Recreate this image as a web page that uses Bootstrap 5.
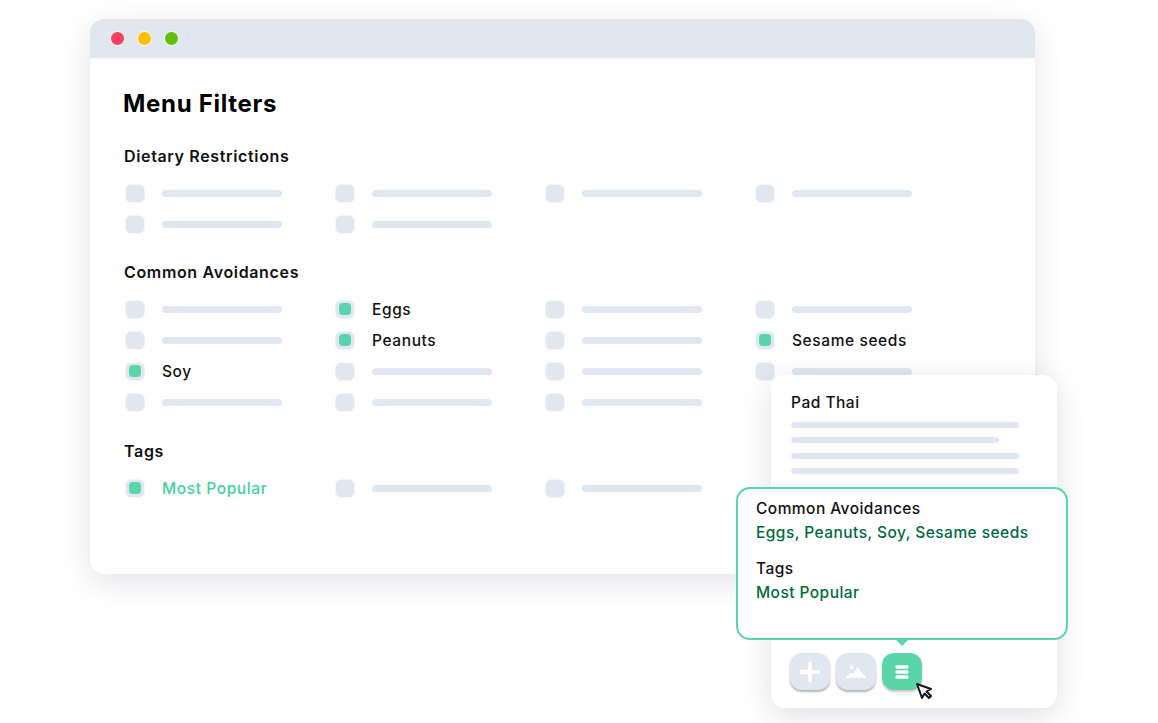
<!DOCTYPE html>
<html lang="en">
<head>
  <meta charset="UTF-8" />
  <meta name="viewport" content="width=device-width, initial-scale=1.0"/>
  <title>Menu Filters</title>
  <link href="https://cdn.jsdelivr.net/npm/bootstrap@5.3.3/dist/css/bootstrap.min.css" rel="stylesheet"/>
  <style>
    body {
      background-color: #ffffff;
      font-family: Inter, "Liberation Sans", sans-serif;
      color: #111111;
      overflow: hidden;
    }
    .stage {
      position: relative;
      width: 1158px;
      height: 723px;
      padding: 19px 0 0 90px;
    }
    .app-window {
      width: 945px;
      height: 555px;
      border-radius: 14px;
      overflow: hidden;
      background-color: #fff;
      box-shadow: 0 8px 30px rgba(40, 50, 70, .13);
    }
    .title-bar {
      height: 39px;
      padding-left: 20px;
      gap: 12px;
      background-color: #e0e7f1;
    }
    .dot {
      width: 15px;
      height: 15px;
      border-radius: 50%;
      border: 1px solid #fff;
    }
    .dot-red { background-color: #f5405f; }
    .dot-yellow { background-color: #ffc000; }
    .dot-green { background-color: #62bf0c; }
    .window-body {
      padding: 31px 0 0 33px;
    }
    .page-title {
      font-size: 24px;
      line-height: 30px;
      font-weight: 700;
      letter-spacing: .7px;
      color: #000;
      margin: 0;
    }
    .group-title {
      font-size: 16px;
      line-height: 20px;
      font-weight: 600;
      letter-spacing: .65px;
      margin: 27px 0 17px 1px;
    }
    .filter-grid + .group-title {
      margin-top: 28px;
    }
    .group-title.tags-title {
      margin-top: 29px;
    }
    .filter-grid {
      display: grid;
      grid-template-columns: repeat(4, 210px);
      row-gap: 11px;
      margin-left: 2px;
    }
    .filter-item {
      height: 20px;
      gap: 17px;
      font-size: 15.5px;
      letter-spacing: .6px;
      font-weight: 500;
    }
    .check-box {
      width: 20px;
      height: 19px;
      flex: none;
      border-radius: 6px;
      background-color: #e0e7f1;
      border: 1px solid #f1f4f9;
    }
    .check-box.on::after {
      content: "";
      width: 12px;
      height: 12px;
      border-radius: 4px;
      background-color: #5ad5a9;
    }
    .skeleton {
      display: block;
      height: 7px;
      border-radius: 4px;
      background-color: #e0e7f1;
    }
    .filter-item .skeleton {
      width: 120px;
    }
    .filter-label {
      padding-top: 1px;
    }
    .green-text {
      color: #3fd09c;
    }
    .menu-card {
      position: absolute;
      left: 771px;
      top: 375px;
      width: 286px;
      height: 333px;
      padding: 18px 20px 18px 20px;
      border-radius: 14px;
      background-color: #fff;
      box-shadow: 0 8px 30px rgba(40, 50, 70, .15);
    }
    .card-name {
      font-size: 15.5px;
      line-height: 20px;
      font-weight: 500;
      letter-spacing: .5px;
      margin-bottom: 9px;
    }
    .desc-lines {
      gap: 9.3px;
    }
    .desc-lines .skeleton {
      height: 6px;
      width: 228px;
    }
    .desc-lines .skeleton.short {
      width: 208px;
    }
    .info-box {
      position: absolute;
      left: -35px;
      top: 112px;
      width: 332px;
      height: 153px;
      padding: 10px 18px;
      border: 2px solid #5ad5a9;
      border-radius: 14px;
      background-color: #fff;
      font-size: 15.5px;
      line-height: 20px;
      letter-spacing: .45px;
      font-weight: 500;
    }
    .info-box::after {
      content: "";
      position: absolute;
      left: 158px;
      bottom: -8px;
      border-left: 6px solid transparent;
      border-right: 6px solid transparent;
      border-top: 6px solid #5ad5a9;
    }
    .info-value {
      color: #006a41;
      margin: 4px 0 16px;
    }
    .tool-row {
      gap: 6px;
      margin-left: -1px;
    }
    .tool-btn {
      width: 40px;
      height: 37px;
      padding: 0;
      border: 0;
      border-radius: 12px;
      background-color: #e0e7f1;
      box-shadow: 0 2px 2px rgba(90, 90, 90, .45);
    }
    .tool-btn.on {
      background-color: #5ad5a9;
      box-shadow: 0 2px 2px rgba(150, 110, 110, .4);
    }
    .cursor-icon {
      position: absolute;
      left: 915px;
      top: 682px;
    }
  </style>
</head>
<body>

<div class="stage">
  <div class="app-window">
    <div class="title-bar d-flex align-items-center">
      <span class="dot dot-red"></span>
      <span class="dot dot-yellow"></span>
      <span class="dot dot-green"></span>
    </div>
    <div class="window-body" id="filters">
      <h1 class="page-title">Menu Filters</h1>
    </div>
  </div>

  <div class="menu-card d-flex flex-column justify-content-between">
    <div>
      <div class="card-name">Pad Thai</div>
      <div class="desc-lines d-flex flex-column">
        <span class="skeleton"></span>
        <span class="skeleton short"></span>
        <span class="skeleton"></span>
        <span class="skeleton"></span>
      </div>
    </div>

    <div class="info-box">
      <div>Common Avoidances</div>
      <div class="info-value">Eggs, Peanuts, Soy, Sesame seeds</div>
      <div>Tags</div>
      <div class="info-value">Most Popular</div>
    </div>

    <div class="tool-row d-flex">
      <button class="tool-btn d-flex align-items-center justify-content-center" type="button" aria-label="Add">
        <svg width="22" height="22" viewBox="0 0 22 22"><path d="M11 2.500v17M2.500 11h17" stroke="#fff" stroke-width="4" stroke-linecap="round"/></svg>
      </button>
      <button class="tool-btn d-flex align-items-center justify-content-center" type="button" aria-label="Image">
        <svg width="20" height="13" viewBox="0 0 20 13"><circle cx="5.500" cy="2.200" r="2" fill="#fff"/><path d="M0 12.200L4.800 7.800 7 9.300 11 3.500c.4-.5 1-.5 1.400 0L20 12.200c.2 .4 0 .8-.5 .8H.6c-.5 0-.8-.5-.6-.8z" fill="#fff"/></svg>
      </button>
      <button class="tool-btn on d-flex align-items-center justify-content-center" type="button" aria-label="Details">
        <svg width="14" height="14" viewBox="0 0 14 14"><path d="M2 2h10M2 7h10M2 12h10" stroke="#fff" stroke-width="3.400" stroke-linecap="round"/></svg>
      </button>
    </div>
  </div>

  <svg class="cursor-icon" width="19" height="18" viewBox="0 0 19 18"><path d="M2 2l5 14 2.500-4.500 4.500 4.500 2-2-4.500-4.500 4.500-2.500z" fill="#fff" stroke="#0d1526" stroke-width="2" stroke-linejoin="round"/></svg>
</div>

<script>
  // null is an unfilled row, a string is a ticked one
  const groups = [
    { title: 'Dietary Restrictions', items: [null, null, null, null, null, null] },
    { title: 'Common Avoidances', items: [
      null, 'Eggs', null, null,
      null, 'Peanuts', null, 'Sesame seeds',
      'Soy', null, null, null,
      null, null, null
    ] },
    { title: 'Tags', titleClass: 'tags-title', items: [{ label: 'Most Popular', green: true }, null, null] }
  ];

  function renderItem(item) {
    if (!item) {
      return `<div class="filter-item d-flex align-items-center"><span class="check-box"></span><span class="skeleton"></span></div>`;
    }
    const label = item.label || item;
    return `<div class="filter-item d-flex align-items-center ${item.green ? 'green-text' : ''}">
      <span class="check-box on d-flex align-items-center justify-content-center"></span><span class="filter-label">${label}</span>
    </div>`;
  }

  document.getElementById('filters').insertAdjacentHTML('beforeend', groups.map(g => `
    <h2 class="group-title ${g.titleClass || ''}">${g.title}</h2>
    <div class="filter-grid">${g.items.map(renderItem).join('')}</div>
  `).join(''));
</script>

<script src="https://cdn.jsdelivr.net/npm/bootstrap@5.3.3/dist/js/bootstrap.bundle.min.js"></script>
</body>
</html>
